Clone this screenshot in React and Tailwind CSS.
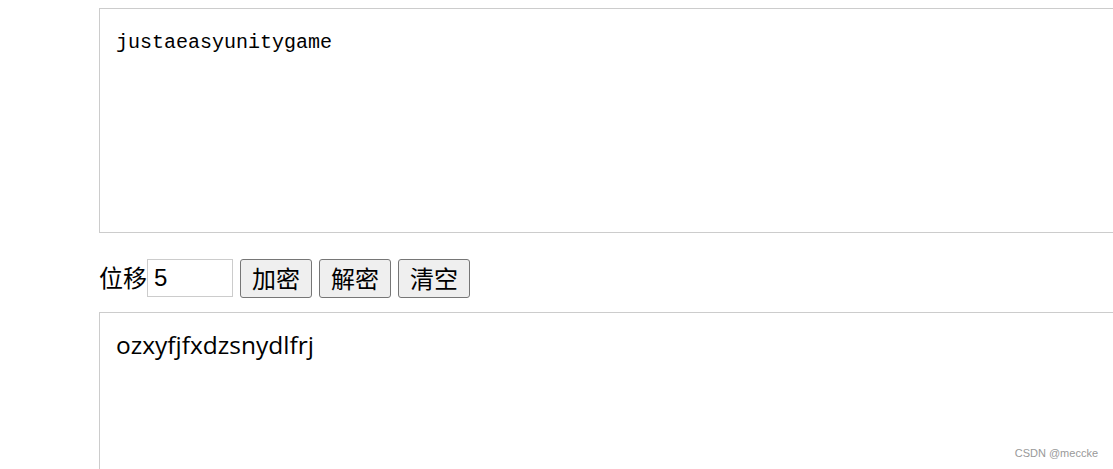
import React, { useState } from "react";

const App = () => {
  const [shift, setShift] = useState("5");

  return (
    <div className="relative h-[469px] w-[1113px] overflow-hidden bg-white">
      <div className="ml-[99px] pt-[8px] font-['Microsoft_YaHei','Noto_Sans_CJK_SC',sans-serif]">
        {/* input text */}
        <div className="h-[225px] w-[1100px] border border-[#cccccc] px-[16px] pt-[21px] font-['Liberation_Mono','Noto_Sans_CJK_SC',monospace] text-[20px] leading-[26px] text-black">
          justaeasyunitygame
        </div>

        {/* controls */}
        <div className="mt-[25px] flex h-[40px] items-center text-[24px] text-black">
          <span className="-mt-[2px] leading-none">位移</span>
          <input
            type="text"
            value={shift}
            onChange={(e) => setShift(e.target.value)}
            className="h-[38px] w-[86px] border border-[#cccccc] px-[6px] font-['Liberation_Sans',sans-serif] text-[24px] outline-none"
          />
          <button className="ml-[7px] h-[39px] w-[72px] rounded-[3px] border border-[#767676] bg-[#efefef] text-[24px] leading-none">
            加密
          </button>
          <button className="ml-[7px] h-[39px] w-[72px] rounded-[3px] border border-[#767676] bg-[#efefef] text-[24px] leading-none">
            解密
          </button>
          <button className="ml-[7px] h-[39px] w-[72px] rounded-[3px] border border-[#767676] bg-[#efefef] text-[24px] leading-none">
            清空
          </button>
        </div>

        {/* output text */}
        <div className="mt-[14px] h-[225px] w-[1100px] border border-[#cccccc] px-[16px] pt-[16px] font-['Open_Sans','Noto_Sans',sans-serif] text-[24.5px] leading-[32px] text-black">
          ozxyfjfxdzsnydlfrj
        </div>
      </div>

      <div className="absolute bottom-[8px] right-[15px] font-['Liberation_Sans',sans-serif] text-[11px] text-[#999999]">
        CSDN @meccke
      </div>
    </div>
  );
};

export default App;
